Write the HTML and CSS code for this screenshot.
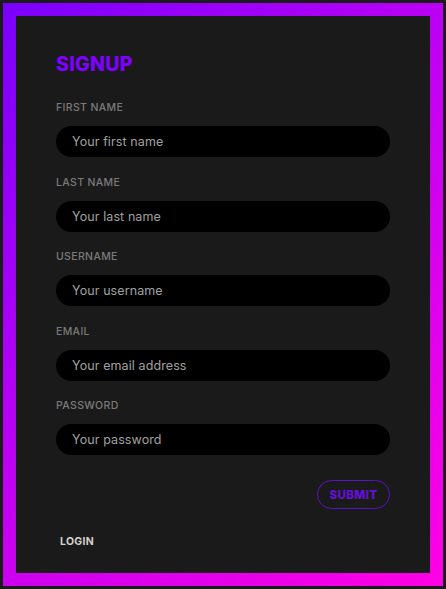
FILE: index.html
```html
<!DOCTYPE html>
<html>
<head>
<meta charset="utf-8">
<link rel="stylesheet" href="styles.css">
</head>
<body>
<div class="frame">
  <div class="panel">
    <h1 class="title">SIGNUP</h1>
    <form class="form">
      <label class="field">
        <span class="label">FIRST NAME</span>
        <input class="input" type="text" placeholder="Your first name">
      </label>
      <label class="field">
        <span class="label">LAST NAME</span>
        <input class="input" type="text" placeholder="Your last name">
      </label>
      <label class="field">
        <span class="label">USERNAME</span>
        <input class="input" type="text" placeholder="Your username">
      </label>
      <label class="field">
        <span class="label">EMAIL</span>
        <input class="input" type="text" placeholder="Your email address">
      </label>
      <label class="field">
        <span class="label">PASSWORD</span>
        <input class="input" type="password" placeholder="Your password">
      </label>
      <div class="actions">
        <button class="submit" type="button">SUBMIT</button>
      </div>
    </form>
    <a class="login">LOGIN</a>
  </div>
</div>
</body>
</html>
```
FILE: styles.css
```css
html, body {
  margin: 0;
  padding: 0;
  background: #1b1b1b;
}
body {
  padding: 3px;
  font-family: Inter, "Open Sans", sans-serif;
}
.frame {
  width: 440px;
  height: 583px;
  box-sizing: border-box;
  padding: 13px;
  background: linear-gradient(135deg, #7a00ff 0%, #c400f2 50%, #ff00e4 100%);
}
.panel {
  height: 100%;
  box-sizing: border-box;
  background: #1a1a1a;
  padding: 36px 40px 0 40px;
  display: flex;
  flex-direction: column;
}
.title {
  margin: 0 0 25px;
  font-size: 19.5px;
  line-height: 24px;
  letter-spacing: 0.3px;
  font-weight: 800;
  color: #8000ff;
}
.form {
  display: flex;
  flex-direction: column;
}
.field {
  display: flex;
  flex-direction: column;
  margin-bottom: 18.6px;
}
.label {
  font-size: 10.5px;
  line-height: 14px;
  letter-spacing: 0.35px;
  color: #7a7a7a;
  font-weight: 500;
  margin-bottom: 11px;
}
.input {
  height: 31px;
  box-sizing: border-box;
  border: none;
  border-radius: 16px;
  background: #000;
  padding: 0 16px;
  font-family: inherit;
  font-size: 12.5px;
  letter-spacing: 0.1px;
  color: #ddd;
  outline: none;
}
.input::placeholder {
  color: #a0a0a0;
}
.actions {
  display: flex;
  justify-content: flex-end;
  margin-top: 6.5px;
}
.submit {
  height: 29px;
  width: 73px;
  border: 1px solid #5a12c8;
  border-radius: 15px;
  background: transparent;
  color: #6410d8;
  font-family: inherit;
  font-weight: 800;
  font-size: 11.5px;
  letter-spacing: 0.4px;
  padding: 0;
}
.login {
  margin-top: 26px;
  margin-left: 4px;
  font-size: 10.5px;
  letter-spacing: 0.3px;
  font-weight: 700;
  color: #d0d0d0;
}
```
